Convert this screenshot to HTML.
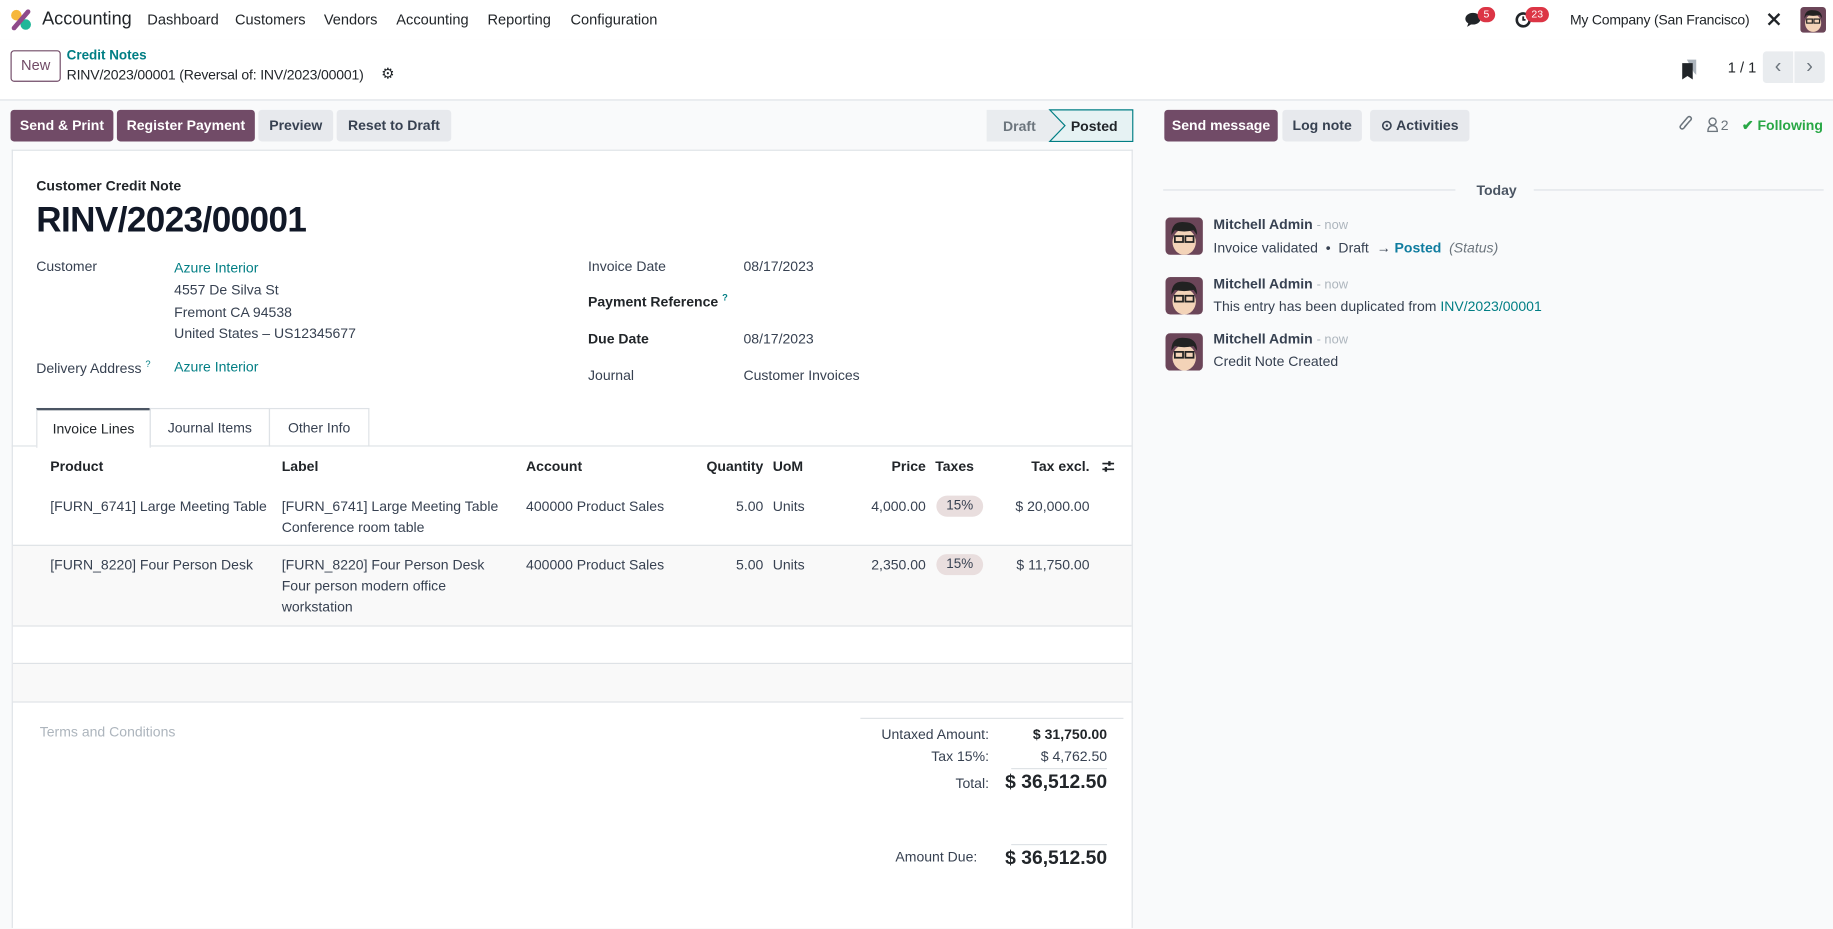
<!DOCTYPE html>
<html><head><meta charset="utf-8"><style>
*{box-sizing:border-box;margin:0;padding:0}
html,body{width:1833px;height:929px;overflow:hidden;background:#f9fafb}
#w{position:absolute;left:0;top:0;width:1568px;height:794px;transform:scale(1.16901);transform-origin:0 0;font-family:"Liberation Sans",sans-serif;font-size:12px;color:#374151;background:#f9fafb;overflow:hidden}
.a{position:absolute;white-space:nowrap}
.btn{position:absolute;height:27px;line-height:27px;border-radius:3px;text-align:center;font-weight:bold;font-size:12px}
.p{background:#714b67;color:#fff}
.g{background:#e7e9ed;color:#374151}
.t{color:#017e84}
.b{font-weight:bold;color:#212529}
.r{text-align:right}
.av{position:absolute;width:32px;height:32px;border-radius:4px;overflow:hidden}
</style></head><body><div id="w">
<div class="a" style="left:0;top:0;width:1568px;height:34px;background:#fff"></div>
<svg class="a" style="left:9px;top:8px" width="18" height="18" viewBox="0 0 18 18"><circle cx="5" cy="5" r="4.5" fill="#f6b73c"/><circle cx="13" cy="13" r="4.5" fill="#21b799"/><path d="M3 16 L15 2" stroke="#8f4a8a" stroke-width="4" stroke-linecap="round"/></svg>
<div class="a" style="left:36px;top:8px;font-size:15.5px;color:#212529">Accounting</div>
<div class="a" style="left:126px;top:10px;font-size:12.5px;color:#212529">Dashboard</div>
<div class="a" style="left:201px;top:10px;font-size:12.5px;color:#212529">Customers</div>
<div class="a" style="left:277px;top:10px;font-size:12.5px;color:#212529">Vendors</div>
<div class="a" style="left:339px;top:10px;font-size:12.5px;color:#212529">Accounting</div>
<div class="a" style="left:417px;top:10px;font-size:12.5px;color:#212529">Reporting</div>
<div class="a" style="left:488px;top:10px;font-size:12.5px;color:#212529">Configuration</div>
<svg class="a" style="left:1253px;top:10px" width="16" height="14" viewBox="0 0 16 14"><ellipse cx="7" cy="6" rx="6.5" ry="5" fill="#212529"/><path d="M3 10 L2 13 L6 10.5Z" fill="#212529"/></svg>
<div class="a" style="left:1264px;top:6px;width:15px;height:13px;border-radius:7px;background:#dc3545;color:#fff;font-size:9px;text-align:center;line-height:13px">5</div>
<svg class="a" style="left:1296px;top:10px" width="14" height="14" viewBox="0 0 14 14"><circle cx="7" cy="7" r="5.5" fill="none" stroke="#212529" stroke-width="2.2"/><path d="M7 4v3h2" stroke="#212529" stroke-width="1.6" fill="none"/></svg>
<div class="a" style="left:1305px;top:6px;width:20px;height:13px;border-radius:7px;background:#dc3545;color:#fff;font-size:9px;text-align:center;line-height:13px">23</div>
<div class="a" style="left:1343px;top:10px;font-size:12px;color:#212529;letter-spacing:-0.2px">My Company (San Francisco)</div>
<svg class="a" style="left:1511px;top:10px" width="13" height="13" viewBox="0 0 14 14"><path d="M2 2 L12 12 M12 2 L2 12" stroke="#212529" stroke-width="2.2"/></svg>
<svg class="a" style="left:1540px;top:6px;border-radius:3px" width="22" height="22" viewBox="0 0 32 32"><rect width="32" height="32" fill="#6b4558"/><ellipse cx="16" cy="20" rx="10" ry="11" fill="#f3d3b8"/><path d="M5 14 Q6 3 16 4 Q27 4 27 14 L24 10 Q16 12 8 10Z" fill="#222"/><rect x="8" y="15" width="7" height="5" fill="none" stroke="#222" stroke-width="1.5"/><rect x="17" y="15" width="7" height="5" fill="none" stroke="#222" stroke-width="1.5"/></svg>
<div class="a" style="left:0;top:34px;width:1568px;height:52px;background:#fff;border-bottom:1px solid #dee2e6"></div>
<div class="a" style="left:9px;top:43px;width:43px;height:27px;border:1px solid #714b67;border-radius:3px;background:#fff;text-align:center;line-height:25px;color:#714b67;font-size:12.5px">New</div>
<div class="a t" style="left:57px;top:42px;font-size:11.5px;font-weight:bold">Credit Notes</div>
<div class="a" style="left:57px;top:57px;font-size:12px;color:#212529;letter-spacing:-0.15px">RINV/2023/00001 (Reversal of: INV/2023/00001)</div>
<div class="a" style="left:326px;top:55px;font-size:13px;color:#212529">⚙</div>
<svg class="a" style="left:1438px;top:50px" width="14" height="18" viewBox="0 0 14 18"><path d="M5 1h8v13l-2-2" fill="#adb5bd"/><path d="M1 4h9v14l-4.5-3L1 18Z" fill="#212529"/></svg>
<div class="a" style="left:1478px;top:51px;font-size:12.5px;color:#212529">1 / 1</div>
<div class="a" style="left:1508px;top:44px;width:26px;height:27px;background:#e9ecef;border-radius:3px 0 0 3px;text-align:center;line-height:26px;color:#6c757d;font-size:17px">‹</div>
<div class="a" style="left:1535px;top:44px;width:26px;height:27px;background:#e9ecef;border-radius:0 3px 3px 0;text-align:center;line-height:26px;color:#6c757d;font-size:17px">›</div>
<div class="btn p" style="left:9px;top:94px;width:88px">Send &amp; Print</div>
<div class="btn p" style="left:100px;top:94px;width:118px">Register Payment</div>
<div class="btn g" style="left:221px;top:94px;width:64px">Preview</div>
<div class="btn g" style="left:288px;top:94px;width:98px">Reset to Draft</div>
<svg class="a" style="left:843px;top:93px" width="127" height="29" viewBox="0 0 127 29"><path d="M1 1H55L68 14.5L55 28H1Z" fill="#e9ecef"/><path d="M55 1H126V28H55L68 14.5Z" fill="#e6f2f3" stroke="#017e84" stroke-width="1"/></svg>
<div class="a" style="left:858px;top:101px;color:#6c757d;font-weight:bold">Draft</div>
<div class="a" style="left:916px;top:101px;color:#212529;font-weight:bold">Posted</div>
<div class="a" style="left:10px;top:128px;width:959px;height:666px;background:#fff;border:1px solid #dee2e6;border-bottom:none"></div>
<div class="a b" style="left:31px;top:152px;font-size:12px">Customer Credit Note</div>
<div class="a" style="left:31px;top:172px;font-size:30px;color:#111827;font-weight:bold;letter-spacing:-0.5px">RINV/2023/00001</div>
<div class="a" style="left:31px;top:221px">Customer</div>
<div class="a t" style="left:149px;top:222px">Azure Interior</div>
<div class="a" style="left:149px;top:241px">4557 De Silva St</div>
<div class="a" style="left:149px;top:260px">Fremont CA 94538</div>
<div class="a" style="left:149px;top:278px">United States – US12345677</div>
<div class="a" style="left:31px;top:307px">Delivery Address <sup class="t" style="font-size:8px">?</sup></div>
<div class="a t" style="left:149px;top:307px">Azure Interior</div>
<div class="a" style="left:503px;top:221px">Invoice Date</div>
<div class="a" style="left:636px;top:221px">08/17/2023</div>
<div class="a b" style="left:503px;top:250px">Payment Reference <sup class="t" style="font-size:8px">?</sup></div>
<div class="a b" style="left:503px;top:283px">Due Date</div>
<div class="a" style="left:636px;top:283px">08/17/2023</div>
<div class="a" style="left:503px;top:314px">Journal</div>
<div class="a" style="left:636px;top:314px">Customer Invoices</div>
<div class="a" style="left:10px;top:381px;width:958px;border-top:1px solid #dee2e6"></div>
<div class="a" style="left:31px;top:349px;width:98px;height:34px;background:#fff;border:1px solid #dee2e6;border-top:2px solid #4b5563;border-bottom:none;text-align:center;line-height:32px;color:#212529">Invoice Lines</div>
<div class="a" style="left:128px;top:349px;width:103px;height:33px;border:1px solid #dee2e6;border-bottom:none;text-align:center;line-height:33px">Journal Items</div>
<div class="a" style="left:230px;top:349px;width:86px;height:33px;border:1px solid #dee2e6;border-bottom:none;text-align:center;line-height:33px">Other Info</div>
<div class="a b" style="left:43px;top:392px">Product</div>
<div class="a b" style="left:241px;top:392px">Label</div>
<div class="a b" style="left:450px;top:392px">Account</div>
<div class="a b r" style="left:583px;top:392px;width:70px">Quantity</div>
<div class="a b" style="left:661px;top:392px">UoM</div>
<div class="a b r" style="left:722px;top:392px;width:70px">Price</div>
<div class="a b" style="left:800px;top:392px">Taxes</div>
<div class="a b r" style="left:852px;top:392px;width:80px">Tax excl.</div>
<svg class="a" style="left:942px;top:393px" width="12" height="12" viewBox="0 0 12 12"><path d="M1 3.5h10M1 8.5h10" stroke="#212529" stroke-width="1.4"/><rect x="6" y="1.5" width="2" height="4" fill="#212529"/><rect x="3" y="6.5" width="2" height="4" fill="#212529"/></svg>
<div class="a" style="left:43px;top:426px">[FURN_6741] Large Meeting Table</div>
<div class="a" style="left:241px;top:426px">[FURN_6741] Large Meeting Table</div>
<div class="a" style="left:241px;top:444px">Conference room table</div>
<div class="a" style="left:450px;top:426px">400000 Product Sales</div>
<div class="a r" style="left:583px;top:426px;width:70px">5.00</div>
<div class="a" style="left:661px;top:426px">Units</div>
<div class="a r" style="left:712px;top:426px;width:80px">4,000.00</div>
<div class="a" style="left:801px;top:424px;width:40px;height:18px;border-radius:9px;background:#e9dede;text-align:center;line-height:18px;font-size:11.5px">15%</div>
<div class="a r" style="left:842px;top:426px;width:90px">$ 20,000.00</div>
<div class="a" style="left:11px;top:466px;width:957px;height:134px;background:#f9f9f9;border-top:1px solid #dee2e6"></div>
<div class="a" style="left:43px;top:476px">[FURN_8220] Four Person Desk</div>
<div class="a" style="left:241px;top:476px">[FURN_8220] Four Person Desk</div>
<div class="a" style="left:241px;top:494px">Four person modern office</div>
<div class="a" style="left:241px;top:512px">workstation</div>
<div class="a" style="left:450px;top:476px">400000 Product Sales</div>
<div class="a r" style="left:583px;top:476px;width:70px">5.00</div>
<div class="a" style="left:661px;top:476px">Units</div>
<div class="a r" style="left:712px;top:476px;width:80px">2,350.00</div>
<div class="a" style="left:801px;top:474px;width:40px;height:18px;border-radius:9px;background:#e9dede;text-align:center;line-height:18px;font-size:11.5px">15%</div>
<div class="a r" style="left:842px;top:476px;width:90px">$ 11,750.00</div>
<div class="a" style="left:11px;top:535px;width:957px;height:33px;background:#fff;border-top:1px solid #dee2e6;border-bottom:1px solid #dee2e6"></div>
<div class="a" style="left:11px;top:600px;width:957px;border-top:1px solid #dee2e6"></div>
<div class="a" style="left:34px;top:619px;color:#adb5bd">Terms and Conditions</div>
<div class="a" style="left:736px;top:614px;width:225px;border-top:1px solid #dee2e6"></div>
<div class="a r" style="left:700px;top:621px;width:146px">Untaxed Amount:</div>
<div class="a r b" style="left:850px;top:621px;width:97px">$ 31,750.00</div>
<div class="a r" style="left:700px;top:640px;width:146px">Tax 15%:</div>
<div class="a r" style="left:850px;top:640px;width:97px">$ 4,762.50</div>
<div class="a" style="left:865px;top:657px;width:82px;border-top:1px solid #dee2e6"></div>
<div class="a r" style="left:700px;top:663px;width:146px">Total:</div>
<div class="a r b" style="left:840px;top:660px;width:107px;font-size:16.5px">$ 36,512.50</div>
<div class="a" style="left:865px;top:722px;width:82px;border-top:1px solid #dee2e6"></div>
<div class="a r" style="left:690px;top:726px;width:146px">Amount Due:</div>
<div class="a r b" style="left:840px;top:725px;width:107px;font-size:16.5px">$ 36,512.50</div>
<div class="btn p" style="left:996px;top:94px;width:97px">Send message</div>
<div class="btn g" style="left:1097px;top:94px;width:68px">Log note</div>
<div class="btn g" style="left:1172px;top:94px;width:85px">⊙ Activities</div>
<svg class="a" style="left:1436px;top:98px" width="12" height="15" viewBox="0 0 12 15"><path d="M9 6 L4.5 11.5 Q3 13 1.8 11.8 Q0.6 10.5 2 9 L7.5 2.5 Q9 1 10.3 2.3 Q11.5 3.6 10 5 L5 10.5" fill="none" stroke="#6c757d" stroke-width="1.3"/></svg>
<svg class="a" style="left:1460px;top:100px" width="10" height="13" viewBox="0 0 10 13"><circle cx="5" cy="4" r="3" fill="none" stroke="#6c757d" stroke-width="1.2"/><path d="M1 12.5 Q1 7.5 5 7.5 Q9 7.5 9 12.5Z" fill="none" stroke="#6c757d" stroke-width="1.2"/></svg>
<div class="a" style="left:1472px;top:100px;color:#6c757d">2</div>
<div class="a" style="left:1490px;top:100px;color:#28a745;font-weight:bold">✔ Following</div>
<div class="a" style="left:995px;top:162px;width:250px;border-top:1px solid #dee2e6"></div>
<div class="a" style="left:1312px;top:162px;width:248px;border-top:1px solid #dee2e6"></div>
<div class="a" style="left:1263px;top:156px;font-weight:bold;color:#4b5563">Today</div>
<svg class="av" style="left:997px;top:186px" viewBox="0 0 32 32"><rect width="32" height="32" fill="#6b4558"/><ellipse cx="16" cy="21" rx="10" ry="11" fill="#f3d3b8"/><path d="M5 15 Q5 3 16 4 Q27 4 27 15 L24 11 Q16 13 8 11Z" fill="#222"/><rect x="8" y="16" width="7" height="5" fill="none" stroke="#222" stroke-width="1.5"/><rect x="17" y="16" width="7" height="5" fill="none" stroke="#222" stroke-width="1.5"/></svg>
<svg class="av" style="left:997px;top:237px" viewBox="0 0 32 32"><rect width="32" height="32" fill="#6b4558"/><ellipse cx="16" cy="21" rx="10" ry="11" fill="#f3d3b8"/><path d="M5 15 Q5 3 16 4 Q27 4 27 15 L24 11 Q16 13 8 11Z" fill="#222"/><rect x="8" y="16" width="7" height="5" fill="none" stroke="#222" stroke-width="1.5"/><rect x="17" y="16" width="7" height="5" fill="none" stroke="#222" stroke-width="1.5"/></svg>
<svg class="av" style="left:997px;top:285px" viewBox="0 0 32 32"><rect width="32" height="32" fill="#6b4558"/><ellipse cx="16" cy="21" rx="10" ry="11" fill="#f3d3b8"/><path d="M5 15 Q5 3 16 4 Q27 4 27 15 L24 11 Q16 13 8 11Z" fill="#222"/><rect x="8" y="16" width="7" height="5" fill="none" stroke="#222" stroke-width="1.5"/><rect x="17" y="16" width="7" height="5" fill="none" stroke="#222" stroke-width="1.5"/></svg>
<div class="a" style="left:1038px;top:185px"><b style="color:#374151">Mitchell Admin</b> <span style="color:#adb5bd;font-size:11px">- now</span></div>
<div class="a" style="left:1038px;top:205px">Invoice validated &nbsp;•&nbsp; Draft &nbsp;→ <b style="color:#0f7c9f">Posted</b> &nbsp;<i style="color:#6c757d">(Status)</i></div>
<div class="a" style="left:1038px;top:236px"><b>Mitchell Admin</b> <span style="color:#adb5bd;font-size:11px">- now</span></div>
<div class="a" style="left:1038px;top:255px">This entry has been duplicated from <span class="t">INV/2023/00001</span></div>
<div class="a" style="left:1038px;top:283px"><b>Mitchell Admin</b> <span style="color:#adb5bd;font-size:11px">- now</span></div>
<div class="a" style="left:1038px;top:302px">Credit Note Created</div>
</div></body></html>
